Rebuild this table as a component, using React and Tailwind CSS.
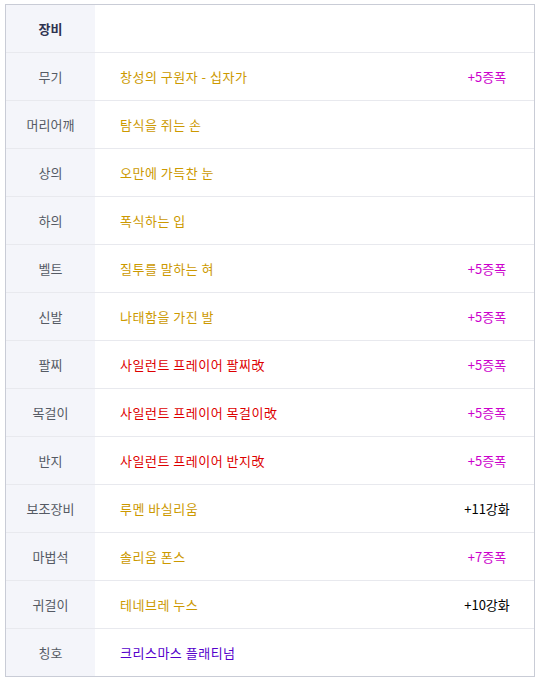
const rows = [
  { label: "무기", name: "창성의 구원자 - 십자가", color: "text-[#cc9900]", extra: "+5증폭", extraColor: "text-[#cc00cc]" },
  { label: "머리어깨", name: "탐식을 쥐는 손", color: "text-[#cc9900]" },
  { label: "상의", name: "오만에 가득찬 눈", color: "text-[#cc9900]" },
  { label: "하의", name: "폭식하는 입", color: "text-[#cc9900]" },
  { label: "벨트", name: "질투를 말하는 혀", color: "text-[#cc9900]", extra: "+5증폭", extraColor: "text-[#cc00cc]" },
  { label: "신발", name: "나태함을 가진 발", color: "text-[#cc9900]", extra: "+5증폭", extraColor: "text-[#cc00cc]" },
  { label: "팔찌", name: "사일런트 프레이어 팔찌改", color: "text-[#dd0000]", extra: "+5증폭", extraColor: "text-[#cc00cc]" },
  { label: "목걸이", name: "사일런트 프레이어 목걸이改", color: "text-[#dd0000]", extra: "+5증폭", extraColor: "text-[#cc00cc]" },
  { label: "반지", name: "사일런트 프레이어 반지改", color: "text-[#dd0000]", extra: "+5증폭", extraColor: "text-[#cc00cc]" },
  { label: "보조장비", name: "루멘 바실리움", color: "text-[#cc9900]", extra: "+11강화", extraColor: "text-black" },
  { label: "마법석", name: "솔리움 폰스", color: "text-[#cc9900]", extra: "+7증폭", extraColor: "text-[#cc00cc]" },
  { label: "귀걸이", name: "테네브레 누스", color: "text-[#cc9900]", extra: "+10강화", extraColor: "text-black" },
  { label: "칭호", name: "크리스마스 플래티넘", color: "text-[#5500cc]" },
];

export default function App() {
  return (
    <div className="bg-white w-[539px] h-[682px] pt-[4px] pl-[5px]" style={{ fontFamily: '"Noto Sans CJK KR", "Noto Sans", sans-serif' }}>
      <div className="w-[530px] border border-[#c9ccd6] text-[13px]">
        <div className="flex h-[48px] border-b border-[#e8e9ee]">
          <div className="w-[89px] bg-[#f4f5fa] flex items-center justify-center font-bold text-[#2f3350] text-[13px]">장비</div>
          <div className="flex-1"></div>
        </div>
        {rows.map((r, i) => (
          <div key={i} className={`flex ${i === rows.length - 1 ? "h-[47px]" : "h-[48px] border-b border-[#e8e9ee]"}`}>
            <div className="w-[89px] bg-[#f4f5fa] flex items-center justify-center text-[#555a64]">{r.label}</div>
            <div className={`flex-1 flex items-center pl-[25px] tracking-[0.5px] ${r.color}`}>{r.name}</div>
            <div className={`w-[94px] flex items-center justify-center ${r.extraColor || ""}`}>{r.extra || ""}</div>
          </div>
        ))}
      </div>
    </div>
  );
}
